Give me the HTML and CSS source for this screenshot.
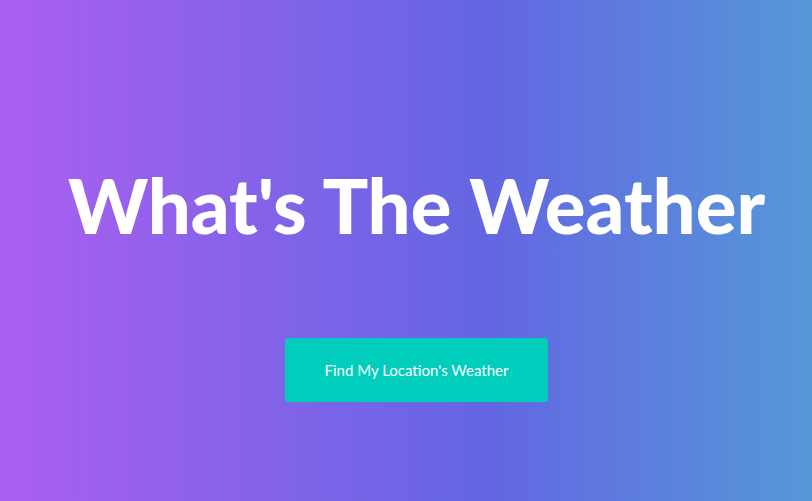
FILE: index.html
```html
<!DOCTYPE html>
<html>
<head>
<meta charset="utf-8">
<link rel="stylesheet" href="styles.css">
</head>
<body>
<main class="hero">
  <h1 class="title">What's The Weather</h1>
  <button class="locate">Find My Location's Weather</button>
</main>
</body>
</html>
```
FILE: styles.css
```css
html, body {
  margin: 0;
  padding: 0;
  height: 100%;
}
body {
  background: linear-gradient(to right, #ab5ff0 0%, #6366e2 60%, #5598d8 100%);
  font-family: "Lato", "Open Sans", sans-serif;
}
.hero {
  height: 100%;
  display: flex;
  flex-direction: column;
  align-items: center;
  padding: 147px 0 0 21px;
  box-sizing: border-box;
}
.title {
  margin: 0;
  color: #fff;
  font-size: 76px;
  font-weight: 900;
  line-height: 116px;
  white-space: nowrap;
}
.locate {
  margin-top: 75px;
  width: 263px;
  height: 64px;
  border: none;
  border-radius: 3px;
  background: #00cdbb;
  color: #fff;
  font-family: "Lato", "Open Sans", sans-serif;
  font-size: 15px;
}
```
